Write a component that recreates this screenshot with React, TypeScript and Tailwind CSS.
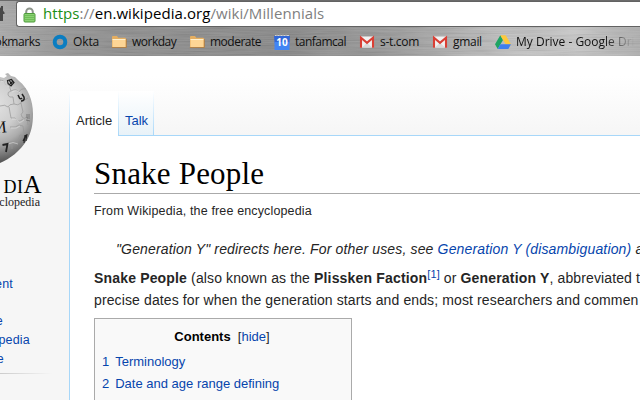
import React from "react";

const CHROME = "font-['Open_Sans','Noto_Sans',sans-serif]";
const BODY = "font-['Liberation_Sans',Arial,sans-serif]";

function Metal() {
  return (
    <svg className="absolute inset-0 h-full w-full" width="640" height="56" aria-hidden="true">
      <defs>
        <linearGradient id="steel" x1="0" x2="1" y1="0" y2="0">
          <stop offset="0" stopColor="#a8a8a8" />
          <stop offset="0.12" stopColor="#8e8e8e" />
          <stop offset="0.45" stopColor="#848484" />
          <stop offset="0.62" stopColor="#989898" />
          <stop offset="0.78" stopColor="#bdbdbd" />
          <stop offset="0.9" stopColor="#c6c6c6" />
          <stop offset="1" stopColor="#acacac" />
        </linearGradient>
        <filter id="brushed" x="0" y="0" width="100%" height="100%">
          <feTurbulence type="fractalNoise" baseFrequency="0.02 0.7" numOctaves="3" seed="4" />
          <feColorMatrix values="1 0 0 0 0  1 0 0 0 0  1 0 0 0 0  0 0 0 0 1" />
        </filter>
      </defs>
      <rect width="640" height="56" fill="url(#steel)" />
      <rect width="640" height="56" filter="url(#brushed)" opacity="0.15" />
    </svg>
  );
}

function Folder() {
  return (
    <svg width="16" height="16" viewBox="0 0 16 16">
      <path d="M1 13V3q0-1 1-1h4l1.300 1.700H14q1 0 1 1V13z" fill="#e5ae60" />
      <path d="M1.500 13V5.300h13V13z" fill="#fdd595" />
      <path d="M1.500 5.500h13" stroke="#fff0cd" />
      <path d="M.8 13.500h14.600V5" fill="none" stroke="#b97e38" strokeWidth=".8" />
    </svg>
  );
}

function Okta() {
  return (
    <svg width="16" height="16" viewBox="0 0 16 16">
      <circle cx="8" cy="8" r="5.300" fill="none" stroke="#0b7dc1" strokeWidth="4" />
    </svg>
  );
}

function Calendar() {
  return (
    <svg width="16" height="16" viewBox="0 0 16 16">
      <path d="M1 1h14v3H1z" fill="#d2d4d8" />
      <path d="M3 0v2M6 0v2M9 0v2M12 0v2" stroke="#999" />
      <path d="M0 2h16l-.6 7H.6z" fill="#3367d6" />
      <path d="M.5 8h15v8H.5z" fill="#4285f4" />
      <text x="8" y="12.400" textAnchor="middle" fontSize="10" fontWeight="700" fill="#fff" fontFamily="Open Sans">10</text>
    </svg>
  );
}

function Gmail() {
  return (
    <svg width="16" height="16" viewBox="0 0 16 16">
      <path d="M1 2.500h14v11H1z" fill="#f1f1f1" />
      <path d="M3 13.500 8 8.700l5 4.800z" fill="#d9d9d9" />
      <path d="M2 13.800V3.700l6 5.200 6-5.200v10.100" fill="none" stroke="#d93f35" strokeWidth="2.100" />
    </svg>
  );
}

function Drive() {
  return (
    <svg width="16" height="16" viewBox="0 0 16 16">
      <path d="M5.300 1.200 8 5.900 2.700 15 0 10.300z" fill="#1fa463" />
      <path d="M5.300 1.200h5.400l5.300 9.100h-5.400z" fill="#fdc93c" />
      <path d="M5.400 10.300H16L13.300 15H2.700z" fill="#3f7fee" />
    </svg>
  );
}

const bookmarks = [
  { label: "Okta", icon: <Okta />, box: "w-[59px]", text: "tracking-[-0.1px]" },
  { label: "workday", icon: <Folder />, box: "w-[78px]", text: "tracking-[-0.5px]" },
  { label: "moderate", icon: <Folder />, box: "w-[85px]", text: "tracking-[-0.5px]" },
  { label: "tanfamcal", icon: <Calendar />, box: "w-[85px]", text: "tracking-[-0.5px]" },
  { label: "s-t.com", icon: <Gmail />, box: "w-[73px]", text: "tracking-[-0.3px]" },
  { label: "gmail", icon: <Gmail />, box: "w-[63px]", text: "tracking-[-0.3px]" },
];

function Globe() {
  return (
    <svg className="block shrink-0" width="40" height="96" viewBox="0 0 40 96">
      <defs>
        <radialGradient id="ball" gradientUnits="userSpaceOnUse" cx="-8" cy="32" r="62">
          <stop offset="0" stopColor="#e4e4e4" />
          <stop offset="0.4" stopColor="#cecece" />
          <stop offset="0.62" stopColor="#acacac" />
          <stop offset="1" stopColor="#444" />
        </radialGradient>
      </defs>
      <path d="M0 4 4 5 7 3 5 1 8 0 11 3 15 4 19 8C28 15 33 27 33 41 33 52 31 60 27 67 20 78 10 86 0 90z" fill="url(#ball)" />
      <g fill="none" stroke="#969696" strokeWidth=".7">
        <path d="M0 7q4 0 5 3t4 2l2 6q-4 1-3 4t5 2l1 7q-5 0-6 3-3-3-8-1M11 18q5-3 8 1 2-4 7-3M14 31q4 2 7-1l1-4q3 2 6-1M21 30l2 9q-3 2-1 5t5 0l1 8M9 34l2 11q5-1 6 2t6-1M10 54q6 1 9-2l4 1 1 7M7 70q5-3 10 0l3-8q4 2 6-2M12 70l0 6" />
      </g>
      <g fill="none" stroke="#e8e8e8" strokeWidth=".5">
        <path d="M1 8q4 0 5 3t4 2M12 19q5-3 8 1M12 46q5-1 6 2t6-1M11 55q6 1 9-2M8 71q5-3 10 0" />
      </g>
      <g fill="none" stroke="#222" strokeWidth="1.500">
        <path d="M7.500 7.500l4-1 2.500 3-3 3.500-3-2.500zM9 7l3 4.500M10 11l3-3" strokeWidth="1.200" />
        <path d="M18 22l1 2q1 3 3 1M21 28q4 0 3-4l-2-3" />
        <path d="M27 41v4h3M29 41v3M26 47l4 1" stroke="#777" strokeWidth="1" />
        <path d="M23 68l3-6v6M25 62l-1 8M27 61l-1 6" strokeWidth="1.100" />
        <path d="M2.500 72l5-1-1.500 8" strokeWidth="1.800" />
      </g>
      <text x="-5" y="60" fontSize="17" fontFamily="Liberation Serif" fill="#111" transform="rotate(-6 0 60)">И</text>
    </svg>
  );
}

function Toolbar() {
  return (
    <header className={`relative h-14 shrink-0 overflow-hidden ${CHROME}`}>
      <Metal />
      <div className="relative flex h-[27px] border-t border-[#6b6b6b]">
        <svg className="mt-[5px] shrink-0" width="16" height="16" viewBox="0 0 16 16">
          <path d="M0 1 4.500 6.500V8H3v7H0z" fill="#484848" />
          <path d="M1 0h2v5H1z" fill="#484848" />
        </svg>
        <div className="flex h-[26px] flex-1 items-center rounded-l-[3px] border border-r-0 border-[#626262] bg-white">
          <svg className="ml-[6px] mt-px shrink-0" width="13" height="16" viewBox="0 0 13 16">
            <path d="M3.200 8V4.800a3.300 3.300 0 0 1 6.600 0V8" fill="none" stroke="#8d948b" strokeWidth="2" />
            <rect x="1" y="6.500" width="11" height="8.500" rx="1" fill="#8bd173" stroke="#4c9b3a" />
            <path d="M2 8.500h9M2 10.500h9M2 12.500h9" stroke="#62b44b" strokeWidth=".7" />
          </svg>
          <span className="-mt-[2px] ml-[7px] whitespace-pre text-[15px] leading-[24px] tracking-[0.06px] text-[#808080]">
            <span className="text-[#1a8f16]">https</span>://<span className="text-black">en.wikipedia.org</span>/wiki/Millennials
          </span>
        </div>
      </div>
      <nav className="relative flex h-[29px] items-center overflow-hidden whitespace-nowrap text-[12px] text-[#111]">
        <span className="flex w-[52px] shrink-0 justify-end pr-[12px] tracking-[-0.4px]">okmarks</span>
        {bookmarks.map((b, i) => (
          <span key={i} className={`flex shrink-0 items-center gap-[5px] ${b.box}`}>
            <span className="shrink-0">{b.icon}</span>
            <span className={b.text}>{b.label}</span>
          </span>
        ))}
        <span className="flex shrink-0 items-center gap-[5px]">
          <Drive />
          <span className="w-[118px] bg-gradient-to-r from-[#111] from-75% to-transparent bg-clip-text text-transparent">My Drive - Google Dri</span>
        </span>
      </nav>
    </header>
  );
}

function Sidebar() {
  return (
    <aside className="flex w-[69px] shrink-0 flex-col overflow-hidden pt-[17px]">
      <Globe />
      <div className="mt-[5px] flex h-[21px] w-[41px] shrink-0 items-baseline justify-end whitespace-nowrap font-['Liberation_Serif',serif] text-[18px] leading-[21px] text-black">
        <span className="tracking-[0.5px]">DI</span><span className="text-[25px] tracking-[-0.5px]">A</span>
      </div>
      <div className="flex w-[40px] shrink-0 justify-end whitespace-nowrap font-['Liberation_Serif',serif] text-[12px] leading-[14px] text-[#222]">clopedia</div>
      <ul className="mt-[66px] shrink-0 text-[12.5px] leading-[19px] tracking-[0.2px] text-[#0645ad]">
        <li className="flex w-[13px] justify-end whitespace-nowrap">ent</li>
        <li className="h-[18px]" />
        <li className="flex w-[3px] justify-end whitespace-nowrap">e</li>
        <li className="flex w-[30px] justify-end whitespace-nowrap">pedia</li>
        <li className="flex w-[4px] justify-end whitespace-nowrap">e</li>
      </ul>
      <div className="mt-[4px] h-px w-[52px] shrink-0 bg-gradient-to-r from-[#ccc] to-transparent" />
    </aside>
  );
}

export default function App() {
  return (
    <div className={`flex h-[400px] w-[640px] flex-col overflow-hidden bg-[#f6f6f6] ${BODY}`}>
      <Toolbar />
      <div className="flex min-h-0 flex-1 bg-[linear-gradient(to_bottom,#fff_0,#fff_20px,#f6f6f6_79px)]">
        <Sidebar />
        <div className="flex min-w-0 flex-1 flex-col">
          <div className="flex h-20 shrink-0 items-end text-[13px]">
            <div className="h-[45px] w-px bg-gradient-to-b from-white to-[#a7d7f9]" />
            <div className="h-[45px] w-12 bg-white pl-[6px] pt-[20px] leading-[20px] text-[#252525]">Article</div>
            <div className="h-[45px] w-px bg-gradient-to-b from-white to-[#a7d7f9]" />
            <div className="h-[45px] w-[34px] border-b border-[#a7d7f9] bg-gradient-to-b from-white to-[#e8f2f8] pl-[6px] pt-[20px] leading-[20px] text-[#0645ad]">Talk</div>
            <div className="h-[45px] w-px bg-gradient-to-b from-white to-[#a7d7f9]" />
            <div className="h-px flex-1 bg-[#a7d7f9]" />
          </div>
          <main className="min-h-0 flex-1 overflow-hidden whitespace-nowrap border-l border-[#a7d7f9] bg-white pl-6 text-[14px] text-[#252525]">
            <h1 className="h-[58px] border-b border-[#aaa] pt-[21px] font-['Liberation_Serif',Georgia,serif] text-[31px] leading-[34px] tracking-[0.2px] text-black">Snake People</h1>
            <p className="mt-[8px] text-[12.5px] leading-[18px] tracking-[0.14px]">From Wikipedia, the free encyclopedia</p>
            <p className="ml-[22px] mt-[18px] italic leading-[22px] tracking-[0.15px]">
              "Generation Y" redirects here. For other uses, see <a className="text-[#0645ad]">Generation Y (disambiguation)</a> a
            </p>
            <p className="mt-[7px] leading-[22px] tracking-[0.12px]">
              <b className="tracking-[0.17px]">Snake People</b> (also known as the <b className="tracking-[0.17px]">Plissken Faction</b><a className="relative -top-[5px] text-[11px] leading-none text-[#0645ad]">[1]</a> or <b className="tracking-[0.17px]">Generation Y</b>, abbreviated t
              <br />precise dates for when the generation starts and ends; most researchers and commen
            </p>
            <div className="mt-[7px] h-[90px] w-[258px] border border-[#aaa] bg-[#f9f9f9] px-[7px] pt-[8px] text-[13px] leading-[20px]">
              <div className="pr-[2px] text-center"><b className="font-bold text-black">Contents</b>&nbsp; [<a className="text-[#0645ad]">hide</a>]</div>
              <ul className="mt-[4px] leading-[22px] text-[#0645ad]">
                <li>1<span className="ml-[6px]">Terminology</span></li>
                <li>2<span className="ml-[6px]">Date and age range defining</span></li>
              </ul>
            </div>
          </main>
        </div>
      </div>
    </div>
  );
}
